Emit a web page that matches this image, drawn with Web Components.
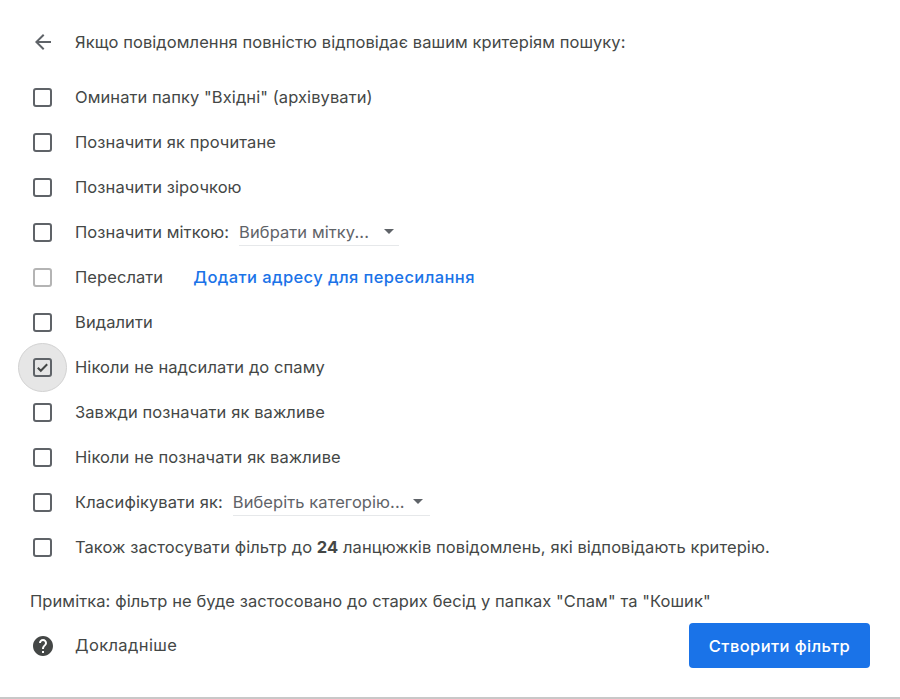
<!DOCTYPE html>
<html lang="uk">
<head>
<meta charset="utf-8">
<title>Фільтр</title>
<style>
  html, body { margin: 0; height: 100%; background: #fff; }
  body { font: 16.5px Inter, "Liberation Sans", sans-serif; color: #444746; }
</style>
</head>
<body>
<filter-dialog>
  <filter-head>Якщо повідомлення повністю відповідає вашим критеріям пошуку:</filter-head>
  <filter-row>Оминати папку "Вхідні" (архівувати)</filter-row>
  <filter-row>Позначити як прочитане</filter-row>
  <filter-row>Позначити зірочкою</filter-row>
  <filter-row>Позначити міткою:<filter-select slot="extra" width="160" text-width="145" style="margin-left:10px">Вибрати мітку...</filter-select></filter-row>
  <filter-row disabled>Переслати<filter-link slot="extra" style="margin-left:30px">Додати адресу для пересилання</filter-link></filter-row>
  <filter-row>Видалити</filter-row>
  <filter-row checked>Ніколи не надсилати до спаму</filter-row>
  <filter-row>Завжди позначати як важливе</filter-row>
  <filter-row>Ніколи не позначати як важливе</filter-row>
  <filter-row>Класифікувати як:<filter-select slot="extra" width="197" text-width="180" style="margin-left:10px">Виберіть категорію...</filter-select></filter-row>
  <filter-row>Також застосувати фільтр до <b>24</b> ланцюжків повідомлень, які відповідають критерію.</filter-row>
  <filter-note>Примітка: фільтр не буде застосовано до старих бесід у папках "Спам" та "Кошик"</filter-note>
  <filter-foot>Докладніше<filter-button slot="action">Створити фільтр</filter-button></filter-foot>
</filter-dialog>

<script>
const FONT = 'Inter, "Liberation Sans", sans-serif';
const TEXT = `
  font-family: ${FONT};
  font-size: 16.5px;
  letter-spacing: 0.08px;
  color: #444746;
`;

class FilterDialog extends HTMLElement {
  constructor () {
    super();
    this.attachShadow({ mode: 'open' });
    this.shadowRoot.innerHTML = `
      <style>
      :host {
        display: flex;
        flex-direction: column;
        box-sizing: border-box;
        width: 900px;
        height: 699px;
        padding-top: 20px;
        border-bottom: 2px solid #c8c8c8;
      }
      </style>
      <slot></slot>`;
  }
}

class FilterHead extends HTMLElement {
  constructor () {
    super();
    this.attachShadow({ mode: 'open' });
    this.shadowRoot.innerHTML = `
      <style>
      :host {
        display: flex;
        align-items: center;
        gap: 20px;
        height: 44px;
        margin-bottom: 11px;
        padding-left: 31px;
        ${TEXT}
      }
      svg { width: 24px; height: 24px; fill: #5f6368; flex: none; }
      </style>
      <svg viewBox="0 0 24 24"><path d="M20 11H7.83l5.59-5.59L12 4l-8 8 8 8 1.41-1.41L7.83 13H20z"/></svg>
      <slot></slot>`;
  }
}

class FilterRow extends HTMLElement {
  constructor () {
    super();
    this.attachShadow({ mode: 'open' });
    this.shadowRoot.innerHTML = `
      <style>
      :host {
        display: flex;
        align-items: center;
        height: 45px;
        padding-left: 33px;
        ${TEXT}
      }
      .check {
        position: relative;
        flex: none;
        width: 19px;
        height: 19px;
        margin-right: 23px;
      }
      .ripple {
        display: none;
        position: absolute;
        left: -15px;
        top: -15px;
        width: 49px;
        height: 49px;
        box-sizing: border-box;
        border-radius: 50%;
        background: #e6e6e6;
        border: 1px solid #d2d2d2;
      }
      .box {
        position: absolute;
        inset: 0;
        box-sizing: border-box;
        border: 2px solid #5f6368;
        border-radius: 3px;
      }
      :host([disabled]) .box { border-color: #b4b4b4; }
      .tick {
        display: none;
        position: absolute;
        inset: 0;
        width: 19px;
        height: 19px;
        fill: none;
        stroke: #444746;
        stroke-width: 2;
      }
      :host([checked]) .ripple, :host([checked]) .tick { display: block; }
      .content {
        display: flex;
        align-items: center;
        margin-bottom: 2px;
      }
      ::slotted(b) { font-weight: 700; }
      </style>
      <span class="check">
        <span class="ripple"></span>
        <span class="box"></span>
        <svg class="tick" viewBox="0 0 19 19"><path d="M4.8 9.8l3 3 6.4-6.6"/></svg>
      </span>
      <span class="content">
        <span class="label"><slot></slot></span>
        <slot name="extra"></slot>
      </span>`;
  }
}

class FilterSelect extends HTMLElement {
  constructor () {
    super();
    this.attachShadow({ mode: 'open' });
    this.shadowRoot.innerHTML = `
      <style>
      :host {
        display: inline-flex;
        align-items: center;
        box-sizing: border-box;
        height: 28px;
        padding-top: 1px;
        border-bottom: 1px solid #e6e8ea;
        color: #5f6368;
      }
      .text { flex: none; white-space: nowrap; }
      .arrow {
        flex: none;
        width: 0;
        height: 0;
        border-left: 5px solid transparent;
        border-right: 5px solid transparent;
        border-top: 5px solid #5f6368;
      }
      </style>
      <span class="text"><slot></slot></span>
      <span class="arrow"></span>`;
  }

  connectedCallback () {
    this.style.width = this.getAttribute('width') + 'px';
    this.shadowRoot.querySelector('.text').style.width = this.getAttribute('text-width') + 'px';
  }
}

class FilterLink extends HTMLElement {
  constructor () {
    super();
    this.attachShadow({ mode: 'open' });
    this.shadowRoot.innerHTML = `
      <style>
      :host { display: inline-block; color: #1a73e8; font-weight: 500; letter-spacing: 0.4px; }
      </style>
      <slot></slot>`;
  }
}

class FilterNote extends HTMLElement {
  constructor () {
    super();
    this.attachShadow({ mode: 'open' });
    this.shadowRoot.innerHTML = `
      <style>
      :host {
        display: flex;
        align-items: center;
        height: 45px;
        margin-top: 8px;
        padding-left: 30px;
        ${TEXT}
      }
      </style>
      <slot></slot>`;
  }
}

class FilterFoot extends HTMLElement {
  constructor () {
    super();
    this.attachShadow({ mode: 'open' });
    this.shadowRoot.innerHTML = `
      <style>
      :host {
        display: flex;
        align-items: center;
        height: 45px;
        padding: 0 30px 0 31px;
        ${TEXT}
      }
      svg { flex: none; width: 24px; height: 24px; margin-right: 20px; fill: #444746; }
      .text { flex: 1; margin-bottom: 2px; letter-spacing: 0.38px; }
      </style>
      <svg viewBox="0 0 24 24"><path d="M12 2C6.48 2 2 6.48 2 12s4.48 10 10 10 10-4.48 10-10S17.52 2 12 2zm1 17h-2v-2h2v2zm2.07-7.75l-.9.92C13.45 12.9 13 13.5 13 15h-2v-.5c0-1.1.45-2.1 1.17-2.83l1.24-1.26c.37-.36.59-.86.59-1.41 0-1.1-.9-2-2-2s-2 .9-2 2H8c0-2.21 1.79-4 4-4s4 1.79 4 4c0 .88-.36 1.68-.93 2.25z"/></svg>
      <span class="text"><slot></slot></span>
      <slot name="action"></slot>`;
  }
}

class FilterButton extends HTMLElement {
  constructor () {
    super();
    this.attachShadow({ mode: 'open' });
    this.shadowRoot.innerHTML = `
      <style>
      :host {
        display: inline-flex;
        align-items: center;
        justify-content: center;
        width: 181px;
        height: 45px;
        border-radius: 4px;
        background: #1a73e8;
        color: #fff;
        font-family: ${FONT};
        font-size: 16.5px;
        font-weight: 500;
        letter-spacing: 0.4px;
      }
      </style>
      <slot></slot>`;
  }
}

customElements.define('filter-dialog', FilterDialog);
customElements.define('filter-head', FilterHead);
customElements.define('filter-row', FilterRow);
customElements.define('filter-select', FilterSelect);
customElements.define('filter-link', FilterLink);
customElements.define('filter-note', FilterNote);
customElements.define('filter-foot', FilterFoot);
customElements.define('filter-button', FilterButton);
</script>
</body>
</html>
